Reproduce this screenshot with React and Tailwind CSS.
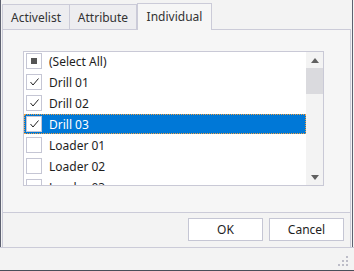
import React from "react";

const items = [
  { label: "(Select All)", state: "some" },
  { label: "Drill 01", state: "on" },
  { label: "Drill 02", state: "on" },
  { label: "Drill 03", state: "on", selected: true },
  { label: "Loader 01", state: "off" },
  { label: "Loader 02", state: "off" },
  { label: "Loader 03", state: "off" },
];

function CheckBox({ state }) {
  return (
    <div className="w-4 h-4 shrink-0 border border-[#c5c6d4] bg-white relative">
      {state === "on" && (
        <svg width="16" height="16" viewBox="0 0 16 16" className="absolute -left-px -top-px">
          <path d="M4.5 8 L7 11 L12.5 4.5" fill="none" stroke="#222" strokeWidth="1" />
        </svg>
      )}
      {state === "some" && (
        <div className="absolute left-[4px] top-[4px] w-[6px] h-[6px] bg-[#555]" />
      )}
    </div>
  );
}

function Row({ item }) {
  return (
    <div className="h-[21px] flex shrink-0">
      {item.selected ? (
        <div className="h-[20px] flex-1 flex items-center gap-[7px] pl-px bg-[#0078d7] text-white border border-dotted border-[#f0a040]">
          <CheckBox state={item.state} />
          <span className="pt-[2px]">{item.label}</span>
        </div>
      ) : (
        <div className="h-[20px] flex-1 flex items-center gap-[7px] pl-[2px] text-[#1e1e1e]">
          <CheckBox state={item.state} />
          <span className="pt-[2px]">{item.label}</span>
        </div>
      )}
    </div>
  );
}

function ScrollBar() {
  return (
    <div className="w-[17px] flex flex-col bg-[#f3f3f3]">
      <div className="h-[16px] flex items-center justify-center">
        <svg width="8" height="5" viewBox="0 0 8 5">
          <path d="M0 5 L4 0 L8 5 Z" fill="#606060" />
        </svg>
      </div>
      <div className="h-[26px] bg-[#dadade]" />
      <div className="flex-1" />
      <div className="h-[16px] flex items-center justify-center">
        <svg width="8" height="5" viewBox="0 0 8 5">
          <path d="M0 0 L8 0 L4 5 Z" fill="#606060" />
        </svg>
      </div>
    </div>
  );
}

export default function App() {
  return (
    <div className="w-[354px] h-[271px] bg-[#f3f3f3] flex flex-col font-['Noto_Sans',sans-serif] text-[12px] overflow-hidden">
      <div className="h-[247px] w-[353px] border-x border-[#5d6170] px-px flex flex-col">
        <div className="h-[29px] flex items-end shrink-0">
          <div className="w-[68px] h-[25px] border border-b-0 border-[#cbcbd8] bg-[#ededf0] flex items-center justify-center text-[#333] pt-px">
            Activelist
          </div>
          <div className="w-[67px] h-[25px] border-t border-r border-[#cbcbd8] bg-[#ededf0] flex items-center justify-center text-[#333] pt-px">
            Attribute
          </div>
          <div className="w-[75px] h-[27px] -mb-px relative z-10 border border-b-0 border-[#cbcbd8] bg-[#f6f6f6] flex items-center justify-center text-[#333]">
            Individual
          </div>
        </div>
        <div className="h-[184px] shrink-0 border border-[#cbcbd8] bg-[#f6f6f6] pl-[20px] pt-[21px]">
          <div className="w-[301px] h-[135px] border border-[#c9c9d6] bg-white flex overflow-hidden">
            <div className="flex-1 flex flex-col -mt-px overflow-hidden">
              {items.map((it) => (
                <Row key={it.label} item={it} />
              ))}
            </div>
            <ScrollBar />
          </div>
        </div>
        <div className="flex-1 border-x border-[#cbcbd8] flex justify-end items-start pt-[5px] pr-[6px] gap-[6px]">
          <button className="w-[75px] h-[23px] border border-[#c5c6d4] bg-white text-[#1e1e1e] pt-px">OK</button>
          <button className="w-[75px] h-[23px] border border-[#c5c6d4] bg-white text-[#1e1e1e] pt-px">Cancel</button>
        </div>
      </div>
      <div className="h-[24px] border-t border-t-[#cbcbd8] border-b border-b-[#4a4e5a] relative">
        <svg width="12" height="12" viewBox="0 0 12 12" className="absolute right-[5px] bottom-[3px]">
          <rect x="9" y="1" width="2" height="2" fill="#bdbdc8" />
          <rect x="5" y="5" width="2" height="2" fill="#bdbdc8" />
          <rect x="9" y="5" width="2" height="2" fill="#bdbdc8" />
          <rect x="1" y="9" width="2" height="2" fill="#bdbdc8" />
          <rect x="5" y="9" width="2" height="2" fill="#bdbdc8" />
          <rect x="9" y="9" width="2" height="2" fill="#bdbdc8" />
        </svg>
      </div>
    </div>
  );
}
